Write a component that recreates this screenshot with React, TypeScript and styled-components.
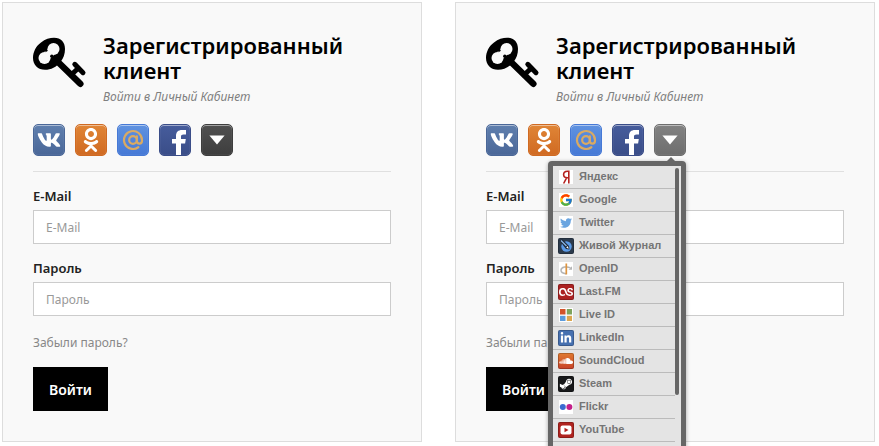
import React from "react";
import styled, { createGlobalStyle, css } from "styled-components";
import {
  FaVk,
  FaOdnoklassniki,
  FaTwitter,
  FaLastfm,
  FaLinkedinIn,
  FaSoundcloud,
  FaSteamSymbol,
} from "react-icons/fa";
import { FcGoogle } from "react-icons/fc";

const GlobalStyle = createGlobalStyle`
  *, *::before, *::after { box-sizing: border-box; }
  body {
    margin: 0;
    overflow: hidden;
    background: #fff;
    color: #222;
    font-family: "Noto Sans", "Open Sans", sans-serif;
    font-size: 12px;
    line-height: 20px;
  }
`;

const Page = styled.main`
  display: grid;
  grid-template-columns: 1fr 1fr;
  gap: 33px;
  padding: 2px 4px 4px 2px;
`;

const Card = styled.section`
  min-width: 0;
  padding: 30px;
  border: 1px solid #ddd;
  background: #f9f9f9;
`;

const Header = styled.header`
  display: flex;
  gap: 16px;
`;

const KeyIcon = styled.svg`
  flex: none;
  width: 54px;
  height: 52px;
  margin-top: 4px;
`;

const Title = styled.h2`
  margin: 0;
  color: #000;
  font-size: 22px;
  font-weight: 600;
  line-height: 25px;
`;

const Subtitle = styled.p`
  margin: 5px 0 0;
  color: #808080;
  font-size: 12px;
  font-style: italic;
  line-height: 18px;
`;

const Socials = styled.div`
  display: flex;
  gap: 10px;
  margin-top: 18px;
  padding-bottom: 15px;
  border-bottom: 1px solid #e0e0e0;
`;

const MoreWrap = styled.div`
  position: relative;
`;

const SocialButton = styled.button<{ $top: string; $bottom: string }>`
  display: flex;
  align-items: center;
  justify-content: center;
  width: 32px;
  height: 32px;
  padding: 0;
  overflow: hidden;
  border: 1px solid ${(p) => p.$bottom};
  border-radius: 5px;
  background: linear-gradient(${(p) => p.$top}, ${(p) => p.$bottom});
  box-shadow: inset 0 1px 0 rgba(255, 255, 255, 0.45), inset 0 0 1px rgba(255, 255, 255, 0.4);
  color: #fff;
  cursor: pointer;

  svg {
    display: block;
  }
`;

const Menu = styled.div`
  position: absolute;
  z-index: 2;
  top: 37px;
  right: 0;
  width: 138px;
  padding: 5px;
  border-radius: 4px;
  background: #666;
  box-shadow: 0 1px 4px rgba(0, 0, 0, 0.35);

  &::before {
    content: "";
    position: absolute;
    top: -4px;
    right: 11px;
    border: solid transparent;
    border-width: 0 4px 4px;
    border-bottom-color: #666;
  }
`;

const MenuBody = styled.div`
  display: flex;
  padding: 0 2px 16px 0;
  background: #e4e4e4;
`;

const ProviderList = styled.ul`
  flex: 1;
  margin: 0;
  padding: 0;
  list-style: none;
`;

const ScrollThumb = styled.div`
  width: 4px;
  height: 227px;
  margin-top: 2px;
  border-radius: 2px;
  background: #666;
`;

const Provider = styled.a`
  display: flex;
  align-items: center;
  gap: 5px;
  height: 23px;
  padding-left: 5px;
  border-bottom: 1px solid #bbb;
  color: #757575;
  font-family: "Liberation Sans", Arial, sans-serif;
  font-size: 11px;
  font-weight: 700;
  line-height: 20px;
  text-decoration: none;
  white-space: nowrap;
`;

const ProviderName = styled.span`
  padding-bottom: 2px;
`;

const Badge = styled.span<{ $bg: string; $plain?: boolean }>`
  display: flex;
  flex: none;
  align-items: center;
  justify-content: center;
  width: 16px;
  height: 16px;
  color: #fff;
  background: ${(p) => p.$bg};
  ${(p) =>
    p.$plain
      ? css`
          border: 1px solid #e4e4e4;
        `
      : css`
          border-radius: 2px;
          box-shadow: inset 0 0 0 1px rgba(0, 0, 0, 0.2);
        `}
`;

const Field = styled.div`
  margin-top: 14px;
`;

const Label = styled.label`
  display: block;
  margin-bottom: 4px;
  color: #222;
  font-size: 13px;
  font-weight: 600;
  line-height: 20px;
`;

const Input = styled.input`
  display: block;
  width: 100%;
  height: 34px;
  padding: 0 12px;
  border: 1px solid #ccc;
  border-radius: 0;
  background: #fff;
  color: #222;
  font: inherit;

  &::placeholder {
    color: #999;
    opacity: 1;
  }
`;

const ForgotLink = styled.a`
  display: block;
  width: max-content;
  margin-top: 17px;
  color: #888;
  text-decoration: none;
`;

const Submit = styled.button`
  display: block;
  height: 44px;
  margin-top: 14px;
  padding: 0 16px;
  border: 0;
  background: #000;
  color: #fff;
  font-family: inherit;
  font-size: 14px;
  font-weight: 600;
`;

const Key = () => (
  <KeyIcon viewBox="0 0 54 52" aria-hidden="true">
    <path
      d="M0 21C0 15 3 9 8 5.500C12 2 17 .7 21 .7C28 .7 32 5 32 12C32 17 30.500 21 27.500 25C23.500 30 18 32.800 12 32.800C5 32.800 0 28 0 21Z"
    />
    <g fill="#f9f9f9">
      <circle cx="11.500" cy="21" r="6" />
      <circle cx="20.500" cy="12" r="6" />
      <path d="M11.500 14.500L15 11.500L21.500 17.500L17.500 21.500Z" />
    </g>
    <circle cx="18.800" cy="19.300" r="1.700" />
    <circle cx="13" cy="13.300" r="1.500" />
    <path d="M25 25L47.300 46.800" stroke="#000" strokeWidth="6.500" strokeLinecap="round" />
    <path d="M38 38L45.500 31M41.800 27.300L50 35.700" fill="none" stroke="#000" strokeWidth="5" strokeLinecap="round" />
  </KeyIcon>
);

const At = () => (
  <svg width="22" height="22" viewBox="0 0 24 24" fill="none" stroke="#d9aa63" strokeWidth="2.400" strokeLinecap="round">
    <circle cx="12" cy="12" r="4.200" />
    <path d="M16.200 8v5.200a2.700 2.700 0 0 0 5.600 0V12a9.800 9.800 0 1 0-4 7.900" />
  </svg>
);

const Facebook = () => (
  <svg width="30" height="30" viewBox="0 0 30 30" fill="#fff">
    <path d="M16 30V18.500h-4v-4.500h4V11c0-4 2.200-6 6-6h4v4.500h-2.500c-1.800 0-2.500.7-2.500 2.300V14h4.800l-.7 4.500H21V30Z" />
  </svg>
);

const Arrow = () => (
  <svg width="16" height="10" viewBox="0 0 16 10" fill="#fff">
    <path d="M.4.5H15.600L8 9.500Z" />
  </svg>
);

const Yandex = () => (
  <svg width="12" height="14" viewBox="0 0 12 14" fill="none" stroke="#b5221f" strokeWidth="1.600">
    <path d="M8.800 13.500V1.200H7.500C4.400 1.200 3.600 3 3.600 4.500C3.600 6.400 4.800 7.800 7.300 7.800H8.800M6.600 7.800L3.600 13.500" />
  </svg>
);

const LiveJournal = () => (
  <svg width="16" height="16" viewBox="0 0 16 16">
    <circle cx="8.500" cy="8.500" r="5.200" fill="#5b9ae6" />
    <path d="M1.500 2.500L4.500 1.500L11 8L11.500 11.500L8 11Z" fill="#1d2733" />
    <path d="M3 2.500L8.500 8" stroke="#8db8e8" strokeWidth="1.200" />
    <path d="M8.200 9.700L9.900 8L10.700 10.700Z" fill="#fff" />
  </svg>
);

const OpenId = () => (
  <svg width="14" height="14" viewBox="0 0 14 14" fill="none">
    <path d="M11.500 5.800C8 4.100 2 4.800 2 8.300C2 10.500 4.500 11.500 7 11.700" stroke="#b5b5b5" strokeWidth="1.500" />
    <path d="M13 4.300V7.700H9.500Z" fill="#b5b5b5" />
    <path d="M7.300 1.500V12.500" stroke="#dd9440" strokeWidth="1.700" />
  </svg>
);

const LiveId = () => (
  <svg width="14" height="14" viewBox="0 0 14 14">
    <path d="M1 1h5.500v5.500H1Z" fill="#d2522a" />
    <path d="M7.800 1h5.200v5.500H7.800Z" fill="#7fa35c" />
    <path d="M1 7.800h5.500V13H1Z" fill="#5c9bdc" />
    <path d="M7.800 7.800H13V13H7.800Z" fill="#dca650" />
  </svg>
);

const Flickr = () => (
  <svg width="14" height="14" viewBox="0 0 14 14">
    <circle cx="3.800" cy="7" r="3" fill="#3c6bd0" />
    <circle cx="10.400" cy="7" r="3" fill="#c4208a" />
  </svg>
);

const YouTube = () => (
  <svg width="12" height="10" viewBox="0 0 12 10">
    <rect x="0.500" y="0.500" width="11" height="9" rx="2" fill="#fff" />
    <path d="M4.500 2.700L8.500 5L4.500 7.300Z" fill="#b3201c" />
  </svg>
);

const providers = [
  { name: "Яндекс", bg: "#fff", plain: true, icon: <Yandex /> },
  { name: "Google", bg: "#fff", plain: true, icon: <FcGoogle size={14} /> },
  { name: "Twitter", bg: "#fff", plain: true, icon: <FaTwitter size={12} color="#6aa5e0" /> },
  { name: "Живой Журнал", bg: "#2b3a4c", icon: <LiveJournal /> },
  { name: "OpenID", bg: "#fff", plain: true, icon: <OpenId /> },
  { name: "Last.FM", bg: "#ac2222", icon: <FaLastfm size={14} /> },
  { name: "Live ID", bg: "#fff", plain: true, icon: <LiveId /> },
  { name: "LinkedIn", bg: "#4670b0", icon: <FaLinkedinIn size={12} /> },
  { name: "SoundCloud", bg: "linear-gradient(#e07a30, #c8432a)", icon: <FaSoundcloud size={14} /> },
  { name: "Steam", bg: "#17181a", icon: <FaSteamSymbol size={14} /> },
  { name: "Flickr", bg: "#fff", plain: true, icon: <Flickr /> },
  { name: "YouTube", bg: "#b0231f", icon: <YouTube /> },
];

const ProviderMenu = () => (
  <Menu>
    <MenuBody>
      <ProviderList>
        {providers.map((p) => (
          <li key={p.name}>
            <Provider href="#">
              <Badge $bg={p.bg} $plain={p.plain}>
                {p.icon}
              </Badge>
              <ProviderName>{p.name}</ProviderName>
            </Provider>
          </li>
        ))}
      </ProviderList>
      <ScrollThumb />
    </MenuBody>
  </Menu>
);

const LoginCard = ({ id, open = false }: { id: string; open?: boolean }) => (
  <Card>
    <Header>
      <Key />
      <div>
        <Title>
          Зарегистрированный
          <br />
          клиент
        </Title>
        <Subtitle>Войти в Личный Кабинет</Subtitle>
      </div>
    </Header>
    <Socials>
      <SocialButton type="button" aria-label="ВКонтакте" $top="#5f7fae" $bottom="#4a6798">
        <FaVk size={24} />
      </SocialButton>
      <SocialButton type="button" aria-label="Одноклассники" $top="#e08536" $bottom="#d06a22">
        <FaOdnoklassniki size={24} />
      </SocialButton>
      <SocialButton type="button" aria-label="Mail.ru" $top="#5f92e0" $bottom="#4679d6">
        <At />
      </SocialButton>
      <SocialButton type="button" aria-label="Facebook" $top="#465c9c" $bottom="#3a4d88">
        <Facebook />
      </SocialButton>
      <MoreWrap>
        <SocialButton
          type="button"
          aria-label="Другие сервисы"
          aria-expanded={open}
          $top={open ? "#828282" : "#505050"}
          $bottom={open ? "#6e6e6e" : "#3e3e3e"}
        >
          <Arrow />
        </SocialButton>
        {open && <ProviderMenu />}
      </MoreWrap>
    </Socials>
    <form onSubmit={(e) => e.preventDefault()}>
      <Field>
        <Label htmlFor={`${id}-email`}>E-Mail</Label>
        <Input id={`${id}-email`} type="email" placeholder="E-Mail" />
      </Field>
      <Field>
        <Label htmlFor={`${id}-password`}>Пароль</Label>
        <Input id={`${id}-password`} type="password" placeholder="Пароль" />
      </Field>
      <ForgotLink href="#">Забыли пароль?</ForgotLink>
      <Submit type="submit">Войти</Submit>
    </form>
  </Card>
);

export default function App() {
  return (
    <>
      <GlobalStyle />
      <Page>
        <LoginCard id="closed" />
        <LoginCard id="opened" open />
      </Page>
    </>
  );
}
